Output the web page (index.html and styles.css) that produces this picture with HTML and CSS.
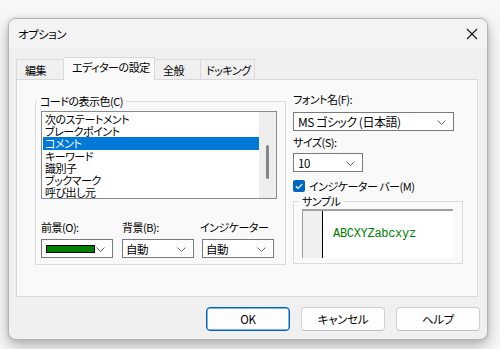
FILE: index.html
```html
<!DOCTYPE html>
<html lang="ja">
<head>
<meta charset="utf-8">
<link rel="stylesheet" href="styles.css">
</head>
<body>
<div class="window">
  <div class="titlebar">
    <span class="title">オプション</span>
    <svg class="close" width="12" height="12" viewBox="0 0 12 12"><path d="M1 1 L11 11 M11 1 L1 11" stroke="#111" stroke-width="1.1" fill="none"/></svg>
  </div>
  <div class="content">
    <div class="tabs">
      <div class="tab t1">編集</div>
      <div class="tab sel">エディターの設定</div>
      <div class="tab t3">全般</div>
      <div class="tab t4">ドッキング</div>
    </div>
    <div class="panel">
      <div class="group colors">
        <span class="legend">コードの表示色(C)</span>
        <div class="listbox">
          <div class="items">
            <div class="item">次のステートメント</div>
            <div class="item">ブレークポイント</div>
            <div class="item selected">コメント</div>
            <div class="item">キーワード</div>
            <div class="item">識別子</div>
            <div class="item">ブックマーク</div>
            <div class="item">呼び出し元</div>
          </div>
          <div class="scrollbar"><div class="thumb"></div></div>
        </div>
        <div class="pickers">
          <div class="picker">
            <div class="lbl">前景(O):</div>
            <div class="combo small"><span class="swatch"></span><svg class="chev" width="9" height="5" viewBox="0 0 9 5"><path d="M0.5 0.5 L4.5 4.5 L8.5 0.5" stroke="#666" fill="none"/></svg></div>
          </div>
          <div class="picker">
            <div class="lbl">背景(B):</div>
            <div class="combo small"><span class="ctext">自動</span><svg class="chev" width="9" height="5" viewBox="0 0 9 5"><path d="M0.5 0.5 L4.5 4.5 L8.5 0.5" stroke="#666" fill="none"/></svg></div>
          </div>
          <div class="picker p3">
            <div class="lbl lbl3">インジケーター</div>
            <div class="combo small"><span class="ctext">自動</span><svg class="chev" width="9" height="5" viewBox="0 0 9 5"><path d="M0.5 0.5 L4.5 4.5 L8.5 0.5" stroke="#666" fill="none"/></svg></div>
          </div>
        </div>
      </div>
      <div class="right">
        <div class="lbl">フォント名(F):</div>
        <div class="combo font"><span class="ctext">MS ゴシック (日本語)</span><svg class="chev" width="9" height="5" viewBox="0 0 9 5"><path d="M0.5 0.5 L4.5 4.5 L8.5 0.5" stroke="#666" fill="none"/></svg></div>
        <div class="lbl size-lbl">サイズ(S):</div>
        <div class="combo size"><span class="ctext">10</span><svg class="chev" width="9" height="5" viewBox="0 0 9 5"><path d="M0.5 0.5 L4.5 4.5 L8.5 0.5" stroke="#666" fill="none"/></svg></div>
        <div class="check-row">
          <span class="checkbox"><svg width="12" height="12" viewBox="0 0 12 12"><path d="M2.8 6.2 L5 8.3 L9.3 3.8" stroke="#fff" stroke-width="1.2" fill="none"/></svg></span>
          <span class="check-lbl">インジケーター バー(M)</span>
        </div>
        <div class="group sample">
          <span class="legend">サンプル</span>
          <div class="sample-box">
            <div class="gutter"></div>
            <div class="sample-text">ABCXYZabcxyz</div>
          </div>
        </div>
      </div>
    </div>
    <div class="buttons">
      <button class="btn ok">OK</button>
      <button class="btn">キャンセル</button>
      <button class="btn">ヘルプ</button>
    </div>
  </div>
</div>
</body>
</html>
```
FILE: styles.css
```css
* { box-sizing: border-box; }
html, body { margin: 0; }
body {
  background: #f7f7f7;
  padding: 18px 0 0 8px;
  font-family: "Noto Sans CJK JP", "Noto Sans", sans-serif;
  font-size: 11px;
  letter-spacing: -0.5px;
  font-feature-settings: "palt";
  color: #000;
  width: 500px;
  height: 349px;
  overflow: hidden;
}
.window {
  width: 480px;
  height: 322px;
  background: #f0f0f0;
  border: 1px solid #b4b4b4;
  border-radius: 8px;
  box-shadow: 0 6px 14px rgba(0,0,0,0.28), 0 0 4px rgba(0,0,0,0.12);
  overflow: hidden;
}
.titlebar {
  height: 29px;
  background: #f3f3f3;
  display: flex;
  align-items: center;
  justify-content: space-between;
  padding: 0 8px 0 9px;
}
.title { line-height: 14px; font-size: 11.5px; }
.close { margin-right: 1px; }
.content { padding: 9px 9px 0 7px; }
.tabs {
  display: flex;
  align-items: flex-start;
  height: 23px;
  margin-bottom: -1px;
  position: relative;
  z-index: 1;
}
.tab {
  height: 20px;
  margin-top: 2px;
  border: 1px solid #d9d9d9;
  border-bottom: none;
  background: #f0f0f0;
  padding-left: 8px;
  line-height: 20px;
  white-space: nowrap;
}
.t1 { width: 48px; }
.t3 { width: 46px; border-left: none; }
.t4 { width: 54px; border-left: none; padding-left: 5px; }
.tab.sel {
  width: 91px;
  height: 23px;
  margin-top: 0;
  background: #f9f9f9;
  line-height: 19px;
  border-left: none;
}
.panel {
  width: 462px;
  height: 218px;
  background: #f9f9f9;
  border: 1px solid #d9d9d9;
  display: flex;
  align-items: flex-start;
  padding: 12px 0 0 18px;
  gap: 7px;
}
.group {
  position: relative;
  border: 1px solid #dcdcdc;
}
.legend {
  position: absolute;
  top: -8px;
  left: 1px;
  padding: 0 3px;
  background: #f9f9f9;
  line-height: 14px;
  white-space: nowrap;
}
.colors {
  margin-top: 9px;
  width: 251px;
  height: 164px;
  padding: 9px 0 0 5px;
}
.listbox {
  width: 236px;
  height: 88px;
  border: 1px solid #868a91;
  background: #fff;
  display: flex;
}
.items {
  flex: 1;
  padding: 1px 0 0 1px;
}
.item {
  height: 12.2px;
  line-height: 12.2px;
  padding-left: 2px;
  white-space: nowrap;
}
.item.selected { background: #0078d7; color: #fff; }
.scrollbar {
  width: 17px;
  background: #eeeeee;
  display: flex;
  justify-content: center;
  padding-top: 33px;
}
.thumb {
  width: 3px;
  height: 34px;
  background: #858585;
  border-radius: 2px;
}
.pickers {
  display: flex;
  gap: 9px;
  margin-top: 21px;
}
.p3 { margin-left: -1px; }
.lbl { line-height: 14px; white-space: nowrap; }
.lbl3 { margin-left: -2px; }
.combo {
  position: relative;
  height: 19px;
  border: 1px solid #7a7a7a;
  background: #fff;
  display: flex;
  align-items: center;
  padding-left: 3px;
}
.picker .combo { margin-top: 5px; }
.combo.small { width: 72px; }
.chev { position: absolute; right: 7px; top: 7px; }
.ctext { line-height: 14px; white-space: nowrap; font-size: 11.5px; }
.swatch {
  width: 49px;
  height: 8px;
  background: #008000;
  border: 1px solid #000;
  margin-left: 1px;
}
.right { width: 170px; }
.combo.font { width: 161px; margin-top: 6px; padding-left: 4px; }
.combo.font .ctext { font-size: 12px; }
.size-lbl { margin-top: 4px; }
.combo.size { width: 70px; margin-top: 4px; padding-left: 4px; }
.check-row {
  display: flex;
  align-items: center;
  margin-top: 7px;
  height: 14px;
}
.checkbox {
  width: 12px;
  height: 12px;
  background: #0067c0;
  border-radius: 2px;
  display: flex;
}
.check-lbl { margin-left: 4px; line-height: 14px; white-space: nowrap; }
.sample {
  margin-top: 8px;
  width: 170px;
  height: 63px;
  padding: 7px 0 0 8px;
}
.sample .legend { left: 5px; }
.sample-box {
  width: 151px;
  height: 49px;
  background: #fff;
  border-top: 2px solid #a0a0a0;
  border-left: 1px solid #a0a0a0;
  display: flex;
  align-items: center;
}
.gutter {
  width: 20px;
  height: 100%;
  background: #f0f0f0;
  border-right: 1px solid #000;
}
.sample-text {
  margin-left: 10px;
  margin-top: -2px;
  font-family: "Liberation Mono", "DejaVu Sans Mono", monospace;
  font-size: 12px;
  letter-spacing: -0.3px;
  color: #008000;
}
.buttons {
  display: flex;
  justify-content: flex-end;
  gap: 11px;
  margin-top: 10px;
  margin-right: -2px;
}
.btn {
  width: 84px;
  height: 24px;
  border: 1px solid #d0d0d0;
  border-bottom-color: #c0c0c0;
  border-radius: 4px;
  background: #fdfdfd;
  font-family: "Noto Sans CJK JP", "Noto Sans", sans-serif;
  font-size: 11.5px;
  letter-spacing: -0.3px;
  font-feature-settings: "palt";
  color: #000;
  padding: 0;
  line-height: 20px;
}
.btn.ok { border: 1px solid #0067c0; box-shadow: inset 0 0 0 0.5px #0067c0; }
```
